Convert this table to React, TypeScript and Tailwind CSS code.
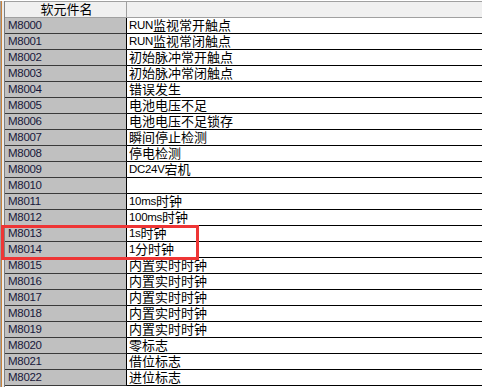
import * as React from "react";

const rows: [string, string][] = [
  ["M8000", "RUN监视常开触点"],
  ["M8001", "RUN监视常闭触点"],
  ["M8002", "初始脉冲常开触点"],
  ["M8003", "初始脉冲常闭触点"],
  ["M8004", "错误发生"],
  ["M8005", "电池电压不足"],
  ["M8006", "电池电压不足锁存"],
  ["M8007", "瞬间停止检测"],
  ["M8008", "停电检测"],
  ["M8009", "DC24V宕机"],
  ["M8010", ""],
  ["M8011", "10ms时钟"],
  ["M8012", "100ms时钟"],
  ["M8013", "1s时钟"],
  ["M8014", "1分时钟"],
  ["M8015", "内置实时时钟"],
  ["M8016", "内置实时时钟"],
  ["M8017", "内置实时时钟"],
  ["M8018", "内置实时时钟"],
  ["M8019", "内置实时时钟"],
  ["M8020", "零标志"],
  ["M8021", "借位标志"],
  ["M8022", "进位标志"],
];

// latin and cjk runs get different sizes, like the old bitmap fonts
function Mixed({ text }: { text: string }) {
  const parts = text.match(/[\x00-\x7f]+|[^\x00-\x7f]+/g) ?? [];
  return (
    <>
      {parts.map((p, i) =>
        /^[\x00-\x7f]/.test(p) ? (
          <span key={i} className="block h-[15px] font-['Liberation_Sans',sans-serif] text-[11.5px] leading-[15px] tracking-[-0.3px]">
            {p}
          </span>
        ) : (
          <span key={i} className="block h-[14px] font-['Noto_Sans_CJK_SC',sans-serif] text-[13px] leading-[14px]">
            {p}
          </span>
        )
      )}
    </>
  );
}

export default function App() {
  return (
    <div className="relative flex h-[387px] w-[482px] overflow-hidden bg-white pt-px">
      <div className="w-px bg-[#a0a0a0]" />
      <div className="w-px bg-[#c8823c]" />
      <div className="w-[2px] bg-[#ececec]" />
      <div className="w-px bg-[#808080]" />
      <div className="flex flex-1 flex-col">
        <div className="flex h-[17px] shrink-0 border-y border-[#a0a0a0] bg-[#f0f0f0]">
          <div className="flex w-[122px] items-start justify-center border-r border-[#a0a0a0] pl-[2px] font-['Noto_Sans_CJK_SC',sans-serif] text-[13px] leading-[14px] text-black">
            软元件名
          </div>
          <div className="flex-1" />
        </div>
        {rows.map(([id, desc]) => (
          <div key={id} className="flex h-[16px] shrink-0">
            <div className="flex w-[122px] items-center border-r border-b border-r-black border-b-[#3a3a3a] bg-[#c0c0c0] pl-[3px] font-['Liberation_Sans',sans-serif] text-[11.5px] leading-[15px] tracking-[-0.3px] text-[#18183a]">
              {id}
            </div>
            <div className="flex flex-1 items-start whitespace-nowrap border-b border-black pl-[2px] text-black">
              <Mixed text={desc} />
            </div>
          </div>
        ))}
      </div>
      <div className="absolute left-px top-[225px] h-[35px] w-[198px] border-[3px] border-[#ee3535]" />
    </div>
  );
}
